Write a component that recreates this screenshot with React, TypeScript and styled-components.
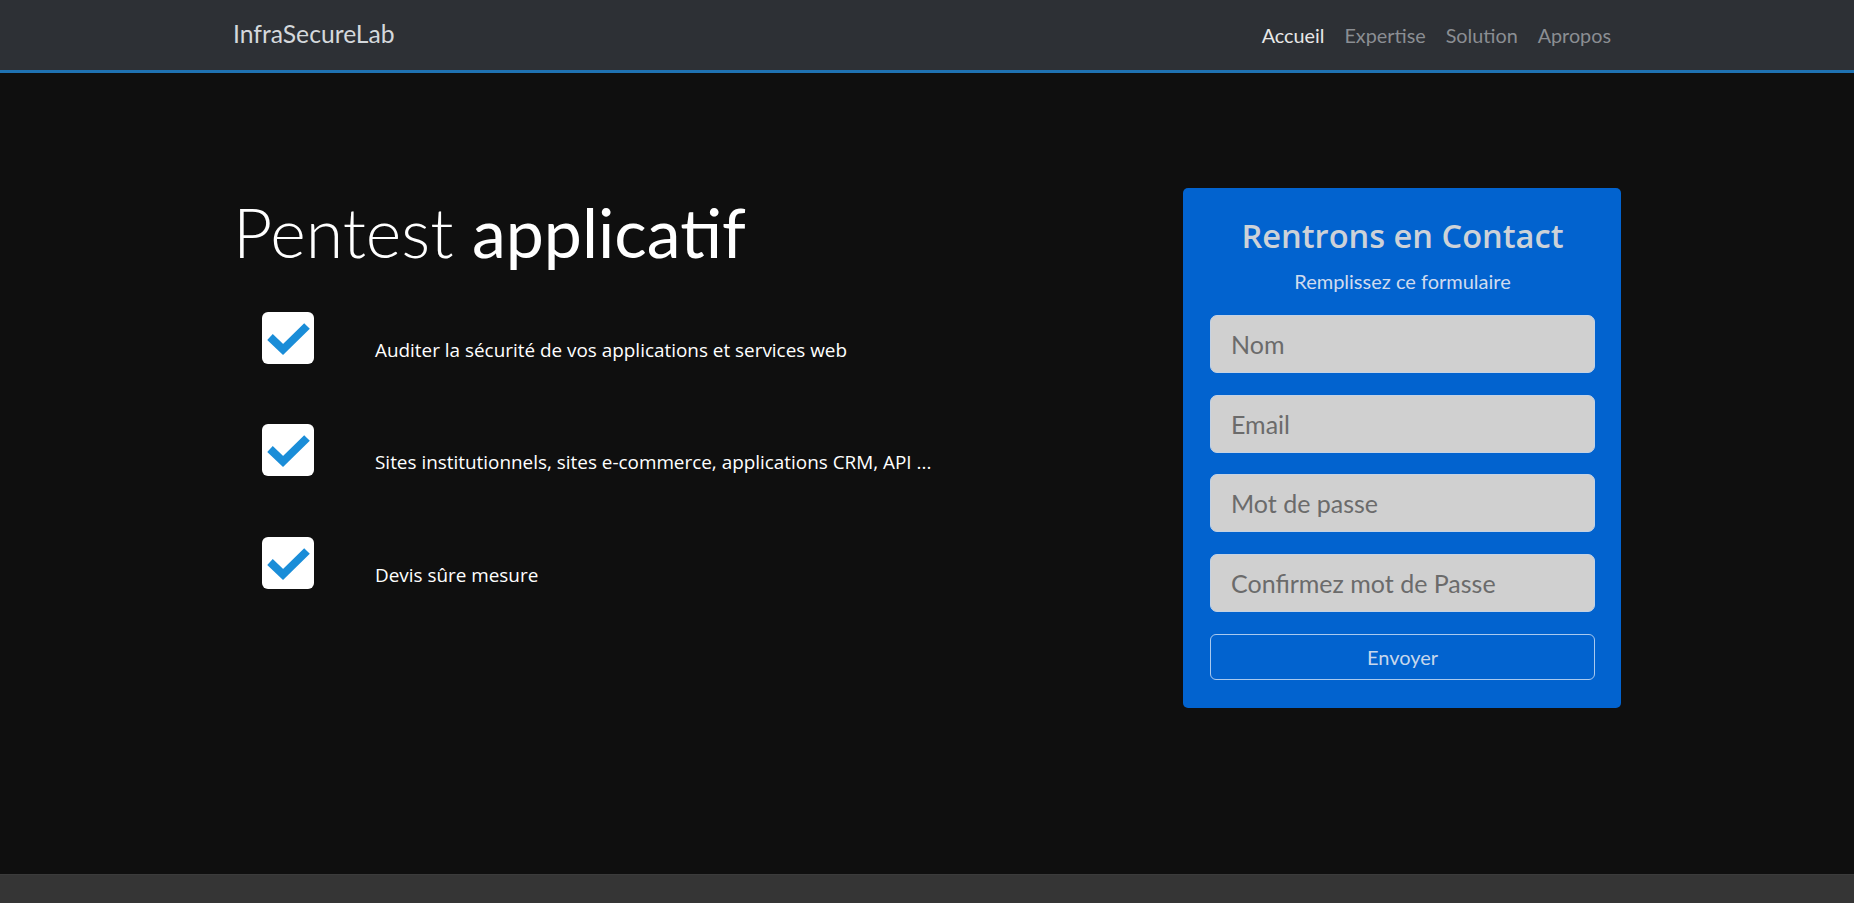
import React from "react";
import styled, { createGlobalStyle } from "styled-components";

const Global = createGlobalStyle`
  * { box-sizing: border-box; }
  html, body { margin: 0; padding: 0; background: #0f0f0f; }
  body { font-family: Lato, "Open Sans", sans-serif; color: #fff; }
`;

const Page = styled.div`
  min-height: 903px;
  display: flex;
  flex-direction: column;
  background: #0f0f0f;
`;

const NavBar = styled.header`
  height: 73px;
  background: #2d3035;
  border-bottom: 3px solid #1f72b2;
`;

const Container = styled.div`
  width: 1388px;
  margin: 0 auto;
`;

const NavInner = styled(Container)`
  height: 70px;
  display: flex;
  align-items: center;
  justify-content: space-between;
`;

const Brand = styled.a`
  font-size: 24.7px;
  color: #d4d8dc;
  text-decoration: none;
  line-height: 1;
  margin-top: -1px;
`;

const NavLinks = styled.nav`
  display: flex;
  align-items: center;
  margin-top: -1px;
`;

const NavLink = styled.a<{ $active?: boolean }>`
  font-size: 19.8px;
  padding: 0 10px;
  color: ${(p) => (p.$active ? "#e8e8e8" : "#8b8e93")};
  text-decoration: none;
`;

const Main = styled.main`
  height: 801px;
  padding-top: 115px;
`;

const Hero = styled(Container)`
  display: flex;
  justify-content: space-between;
  align-items: flex-start;
`;

const LeftCol = styled.div`
  display: flex;
  flex-direction: column;
`;

const Title = styled.h1`
  margin: 3px 0 39px;
  font-size: 68px;
  line-height: 1.2;
  font-weight: 300;
  color: #fff;
  strong { font-weight: 400; }
`;

const List = styled.ul`
  list-style: none;
  margin: 0;
  padding: 0 0 0 29px;
  display: flex;
  flex-direction: column;
  gap: 60.5px;
`;

const Item = styled.li`
  display: flex;
  align-items: flex-end;
  gap: 61px;
  font-family: "Open Sans", Lato, sans-serif;
  font-size: 18.9px;
  line-height: 27px;
`;

const CheckBox = styled.svg`
  width: 52px;
  height: 52px;
  flex: none;
`;

const Card = styled.form`
  width: 438px;
  height: 520px;
  background: #0263cf;
  border-radius: 5px;
  padding: 29px 26px 0 27px;
  display: flex;
  flex-direction: column;
  align-items: stretch;
`;

const CardTitle = styled.h2`
  margin: 0 0 12px;
  font-family: "Open Sans", Lato, sans-serif;
  font-size: 32.6px;
  line-height: 38px;
  font-weight: 600;
  text-align: center;
  color: #cdd2d8;
`;

const CardSub = styled.p`
  margin: 0 0 20px;
  font-size: 20px;
  line-height: 28px;
  text-align: center;
  color: #d0dbee;
`;

const Fields = styled.div`
  display: flex;
  flex-direction: column;
  gap: 21.5px;
`;

const Input = styled.input`
  height: 58px;
  width: 100%;
  border-radius: 7px;
  border: 1px solid #c4d2e4;
  background: #d0d0d0;
  padding: 0 20px;
  font-family: Lato, "Open Sans", sans-serif;
  font-size: 25px;
  color: #333;
  outline: none;
  &::placeholder { color: #6b6b6b; }
`;

const Button = styled.button`
  margin-top: 22.5px;
  height: 46px;
  width: 100%;
  border-radius: 6px;
  border: 1px solid #a9c9ef;
  background: transparent;
  font-family: Lato, "Open Sans", sans-serif;
  font-size: 20px;
  color: #c7d7ec;
  cursor: pointer;
`;

const Footer = styled.footer`
  flex: 1;
  min-height: 29px;
  background: #353535;
  border-top: 1px solid #3b3b3b;
`;

const Check = () => (
  <CheckBox viewBox="0 0 52 52">
    <rect x="0" y="0" width="52" height="52" rx="6" fill="#fff" />
    <path d="M8 25 L21 37.5 L45 14" fill="none" stroke="#1a8dd8" strokeWidth="8" strokeLinejoin="miter" strokeLinecap="butt" />
  </CheckBox>
);

const items = [
  "Auditer la sécurité de vos applications et services web",
  "Sites institutionnels, sites e-commerce, applications CRM, API ...",
  "Devis sûre mesure",
];

export default function App() {
  return (
    <Page>
      <Global />
      <NavBar>
        <NavInner>
          <Brand href="#">InfraSecureLab</Brand>
          <NavLinks>
            <NavLink href="#" $active>Accueil</NavLink>
            <NavLink href="#">Expertise</NavLink>
            <NavLink href="#">Solution</NavLink>
            <NavLink href="#">Apropos</NavLink>
          </NavLinks>
        </NavInner>
      </NavBar>
      <Main>
        <Hero>
          <LeftCol>
            <Title>
              Pentest <strong>applicatif</strong>
            </Title>
            <List>
              {items.map((t) => (
                <Item key={t}>
                  <Check />
                  <span>{t}</span>
                </Item>
              ))}
            </List>
          </LeftCol>
          <Card onSubmit={(e) => e.preventDefault()}>
            <CardTitle>Rentrons en Contact</CardTitle>
            <CardSub>Remplissez ce formulaire</CardSub>
            <Fields>
              <Input placeholder="Nom" />
              <Input placeholder="Email" type="email" />
              <Input placeholder="Mot de passe" type="password" />
              <Input placeholder="Confirmez mot de Passe" type="password" />
            </Fields>
            <Button type="submit">Envoyer</Button>
          </Card>
        </Hero>
      </Main>
      <Footer />
    </Page>
  );
}
